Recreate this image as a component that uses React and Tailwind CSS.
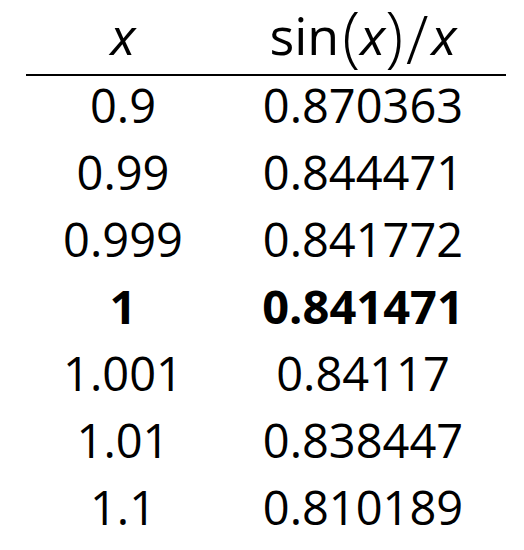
const rows = [
  { x: '0.9', y: '0.870363' },
  { x: '0.99', y: '0.844471' },
  { x: '0.999', y: '0.841772' },
  { x: '1', y: '0.841471', bold: true },
  { x: '1.001', y: '0.84117' },
  { x: '1.01', y: '0.838447' },
  { x: '1.1', y: '0.810189' },
];

export default function App() {
  return (
    <div className="w-[524px] h-[550px] bg-white text-black font-['Open_Sans',sans-serif]">
      <div className="ml-[26px] w-[480px]">
        {/* header */}
        <div className="flex h-[76px] border-b-2 border-black text-[52px] leading-[70px]">
          <div className="w-[194px] text-center italic">x</div>
          <div className="flex-1 text-center whitespace-nowrap">
            sin
            <span className="text-[66px] leading-none font-light align-[-5px] ml-[3px]">(</span>
            <span className="italic">x</span>
            <span className="text-[66px] leading-none font-light align-[-5px]">)</span>
            <span className="text-[66px] leading-none font-light align-[-9px] mx-[3px]">/</span>
            <span className="italic">x</span>
          </div>
        </div>

        {/* values */}
        {rows.map((r) => (
          <div
            key={r.x}
            className={`flex h-[67px] text-[47px] leading-[58px] ${r.bold ? 'font-bold' : ''}`}
          >
            <div className="w-[194px] text-center">{r.x}</div>
            <div className="flex-1 text-center">{r.y}</div>
          </div>
        ))}
      </div>
    </div>
  );
}
